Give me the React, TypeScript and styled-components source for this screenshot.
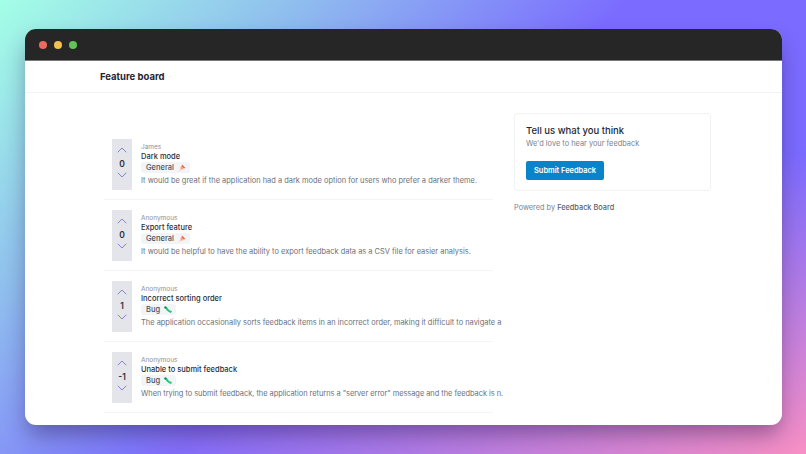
import React from "react";
import styled, { createGlobalStyle } from "styled-components";
import { ChevronDown, ChevronUp } from "lucide-react";

const GlobalStyle = createGlobalStyle`
  html, body {
    margin: 0;
    padding: 0;
    width: 100%;
    height: 100%;
  }
  * { box-sizing: border-box; }
  #root { height: 100%; }
`;

const Page = styled.div`
  width: 806px;
  height: 454px;
  overflow: hidden;
  padding: 29px 24px 29px 25px;
  font-family: Inter, "Open Sans", sans-serif;
  background:
    radial-gradient(ellipse 680px 300px at 100% 100%, #f78fc4 0%, rgba(247, 143, 196, 0) 100%),
    linear-gradient(135deg, #a3ffe6 0%, #8fbdee 24%, #7b6bff 50%, #7b6bff 100%);
`;

const Window = styled.div`
  height: 396px;
  border-radius: 11px;
  overflow: hidden;
  background: #fff;
  box-shadow: 0 12px 22px -3px rgba(40, 25, 70, 0.45);
`;

const TitleBar = styled.div`
  height: 32px;
  background: #262626;
  border-bottom: 1px solid #77777c;
  display: flex;
  align-items: center;
  gap: 7px;
  padding-left: 14px;
`;

const Light = styled.span<{ $color: string }>`
  width: 8px;
  height: 8px;
  border-radius: 50%;
  background: ${(p) => p.$color};
`;

const Header = styled.div`
  height: 32px;
  border-bottom: 1px solid #f1f2f4;
  display: flex;
  align-items: center;
  padding-left: 75px;
`;

const Brand = styled.h1`
  margin: 0;
  font-size: 9.5px;
  font-weight: 700;
  color: #1f2433;
`;

const Content = styled.div`
  display: flex;
  padding: 20px 0 0 79px;
`;

const List = styled.div`
  width: 389px;
  flex-shrink: 0;
  padding-top: 26px;
`;

const Item = styled.div`
  height: 61px;
  margin-bottom: 10px;
  padding-left: 8px;
  display: flex;
  gap: 9px;
  border-bottom: 1px solid #f3f4f6;
`;

const VoteBox = styled.div`
  width: 20px;
  height: 51px;
  flex-shrink: 0;
  padding-top: 3px;
  background: #e3e5ea;
  display: flex;
  flex-direction: column;
  align-items: center;
  color: #6f76c4;
`;

const Score = styled.span`
  margin: 0.5px 0 -2.5px;
  font-size: 8.5px;
  font-weight: 600;
  line-height: 11px;
  color: #2b2f3a;
`;

const Body = styled.div`
  width: 361px;
  flex-shrink: 0;
  padding-top: 4px;
`;

const Author = styled.div`
  font-size: 6.5px;
  line-height: 8px;
  color: #8b909a;
`;

const Title = styled.div`
  font-size: 7.5px;
  font-weight: 500;
  line-height: 11px;
  color: #2a2e3a;
`;

const Tag = styled.div`
  display: flex;
  width: fit-content;
  align-items: center;
  gap: 4px;
  height: 11px;
  margin-bottom: 1.5px;
  padding: 0 4px 0 5px;
  border-radius: 3px;
  background: #f3f4f6;
  font-size: 7.5px;
  font-weight: 500;
  color: #4a4f5c;
`;

const Description = styled.p<{ $tracking: number }>`
  margin: 0;
  font-size: 7.45px;
  line-height: 12px;
  letter-spacing: ${(p) => p.$tracking}px;
  white-space: nowrap;
  color: #6c717c;
`;

const Sidebar = styled.div`
  width: 197px;
  margin-left: 21px;
`;

const Card = styled.div`
  height: 78px;
  border: 1px solid #f1f2f4;
  border-radius: 3px;
  padding: 10px 11px;
`;

const CardTitle = styled.h2`
  margin: 0;
  font-size: 9.5px;
  font-weight: 500;
  line-height: 14px;
  color: #252935;
`;

const CardText = styled.p`
  margin: 0;
  font-size: 7.4px;
  line-height: 12px;
  color: #7d828c;
`;

const SubmitButton = styled.button`
  display: block;
  width: 78px;
  height: 19px;
  margin-top: 11px;
  padding: 0;
  border: 0;
  border-radius: 2px;
  background: #0a84c8;
  color: #fff;
  font-family: inherit;
  font-size: 7.4px;
  font-weight: 600;
`;

const Powered = styled.div`
  margin-top: 11px;
  font-size: 7.35px;
  line-height: 11px;
  color: #7d828c;

  b {
    font-weight: 500;
    color: #5a5f6b;
  }
`;

const PinIcon = () => (
  <svg width="8" height="8" viewBox="0 0 8 8">
    <path d="M4 .5 7.5 4 5.6 4.6 3.4 2.4Z" fill="#f0623f" />
    <path d="M3 2.6 5.4 5 4 5.8 2.2 4Z" fill="#f59a7c" />
    <path d="M2.6 4.8 .6 7.4 3.2 5.4Z" fill="#f7b09a" />
  </svg>
);

const BugIcon = () => (
  <svg width="8" height="8" viewBox="0 0 8 8">
    <path d="M1.4 1.6C2.6 1.8 3 3.2 3.9 4.2S5.6 5.4 6.8 5.8" fill="none" stroke="#1fc77a" strokeWidth="2" strokeLinecap="round" />
    <circle cx="1.4" cy="1.5" r="1.1" fill="#0f7d55" />
  </svg>
);

const items = [
  {
    author: "James",
    title: "Dark mode",
    tag: "General",
    score: 0,
    tracking: 0,
    text: "It would be great if the application had a dark mode option for users who prefer a darker theme.",
  },
  {
    author: "Anonymous",
    title: "Export feature",
    tag: "General",
    score: 0,
    tracking: 0,
    text: "It would be helpful to have the ability to export feedback data as a CSV file for easier analysis.",
  },
  {
    author: "Anonymous",
    title: "Incorrect sorting order",
    tag: "Bug",
    score: 1,
    tracking: 0,
    text: "The application occasionally sorts feedback items in an incorrect order, making it difficult to navigate a",
  },
  {
    author: "Anonymous",
    title: "Unable to submit feedback",
    tag: "Bug",
    score: -1,
    tracking: -0.04,
    text: 'When trying to submit feedback, the application returns a "server error" message and the feedback is n.',
  },
];

export default function App() {
  return (
    <Page>
      <GlobalStyle />
      <Window>
        <TitleBar>
          <Light $color="#ec6a5e" />
          <Light $color="#f4bf4f" />
          <Light $color="#61c554" />
        </TitleBar>
        <Header>
          <Brand>Feature board</Brand>
        </Header>
        <Content>
          <List>
            {items.map((item) => (
              <Item key={item.title}>
                <VoteBox>
                  <ChevronUp size={16} strokeWidth={1.3} />
                  <Score>{item.score}</Score>
                  <ChevronDown size={16} strokeWidth={1.3} />
                </VoteBox>
                <Body>
                  <Author>{item.author}</Author>
                  <Title>{item.title}</Title>
                  <Tag>
                    {item.tag}
                    {item.tag === "Bug" ? <BugIcon /> : <PinIcon />}
                  </Tag>
                  <Description $tracking={item.tracking}>{item.text}</Description>
                </Body>
              </Item>
            ))}
          </List>
          <Sidebar>
            <Card>
              <CardTitle>Tell us what you think</CardTitle>
              <CardText>We'd love to hear your feedback</CardText>
              <SubmitButton>Submit Feedback</SubmitButton>
            </Card>
            <Powered>
              Powered by <b>Feedback Board</b>
            </Powered>
          </Sidebar>
        </Content>
      </Window>
    </Page>
  );
}
